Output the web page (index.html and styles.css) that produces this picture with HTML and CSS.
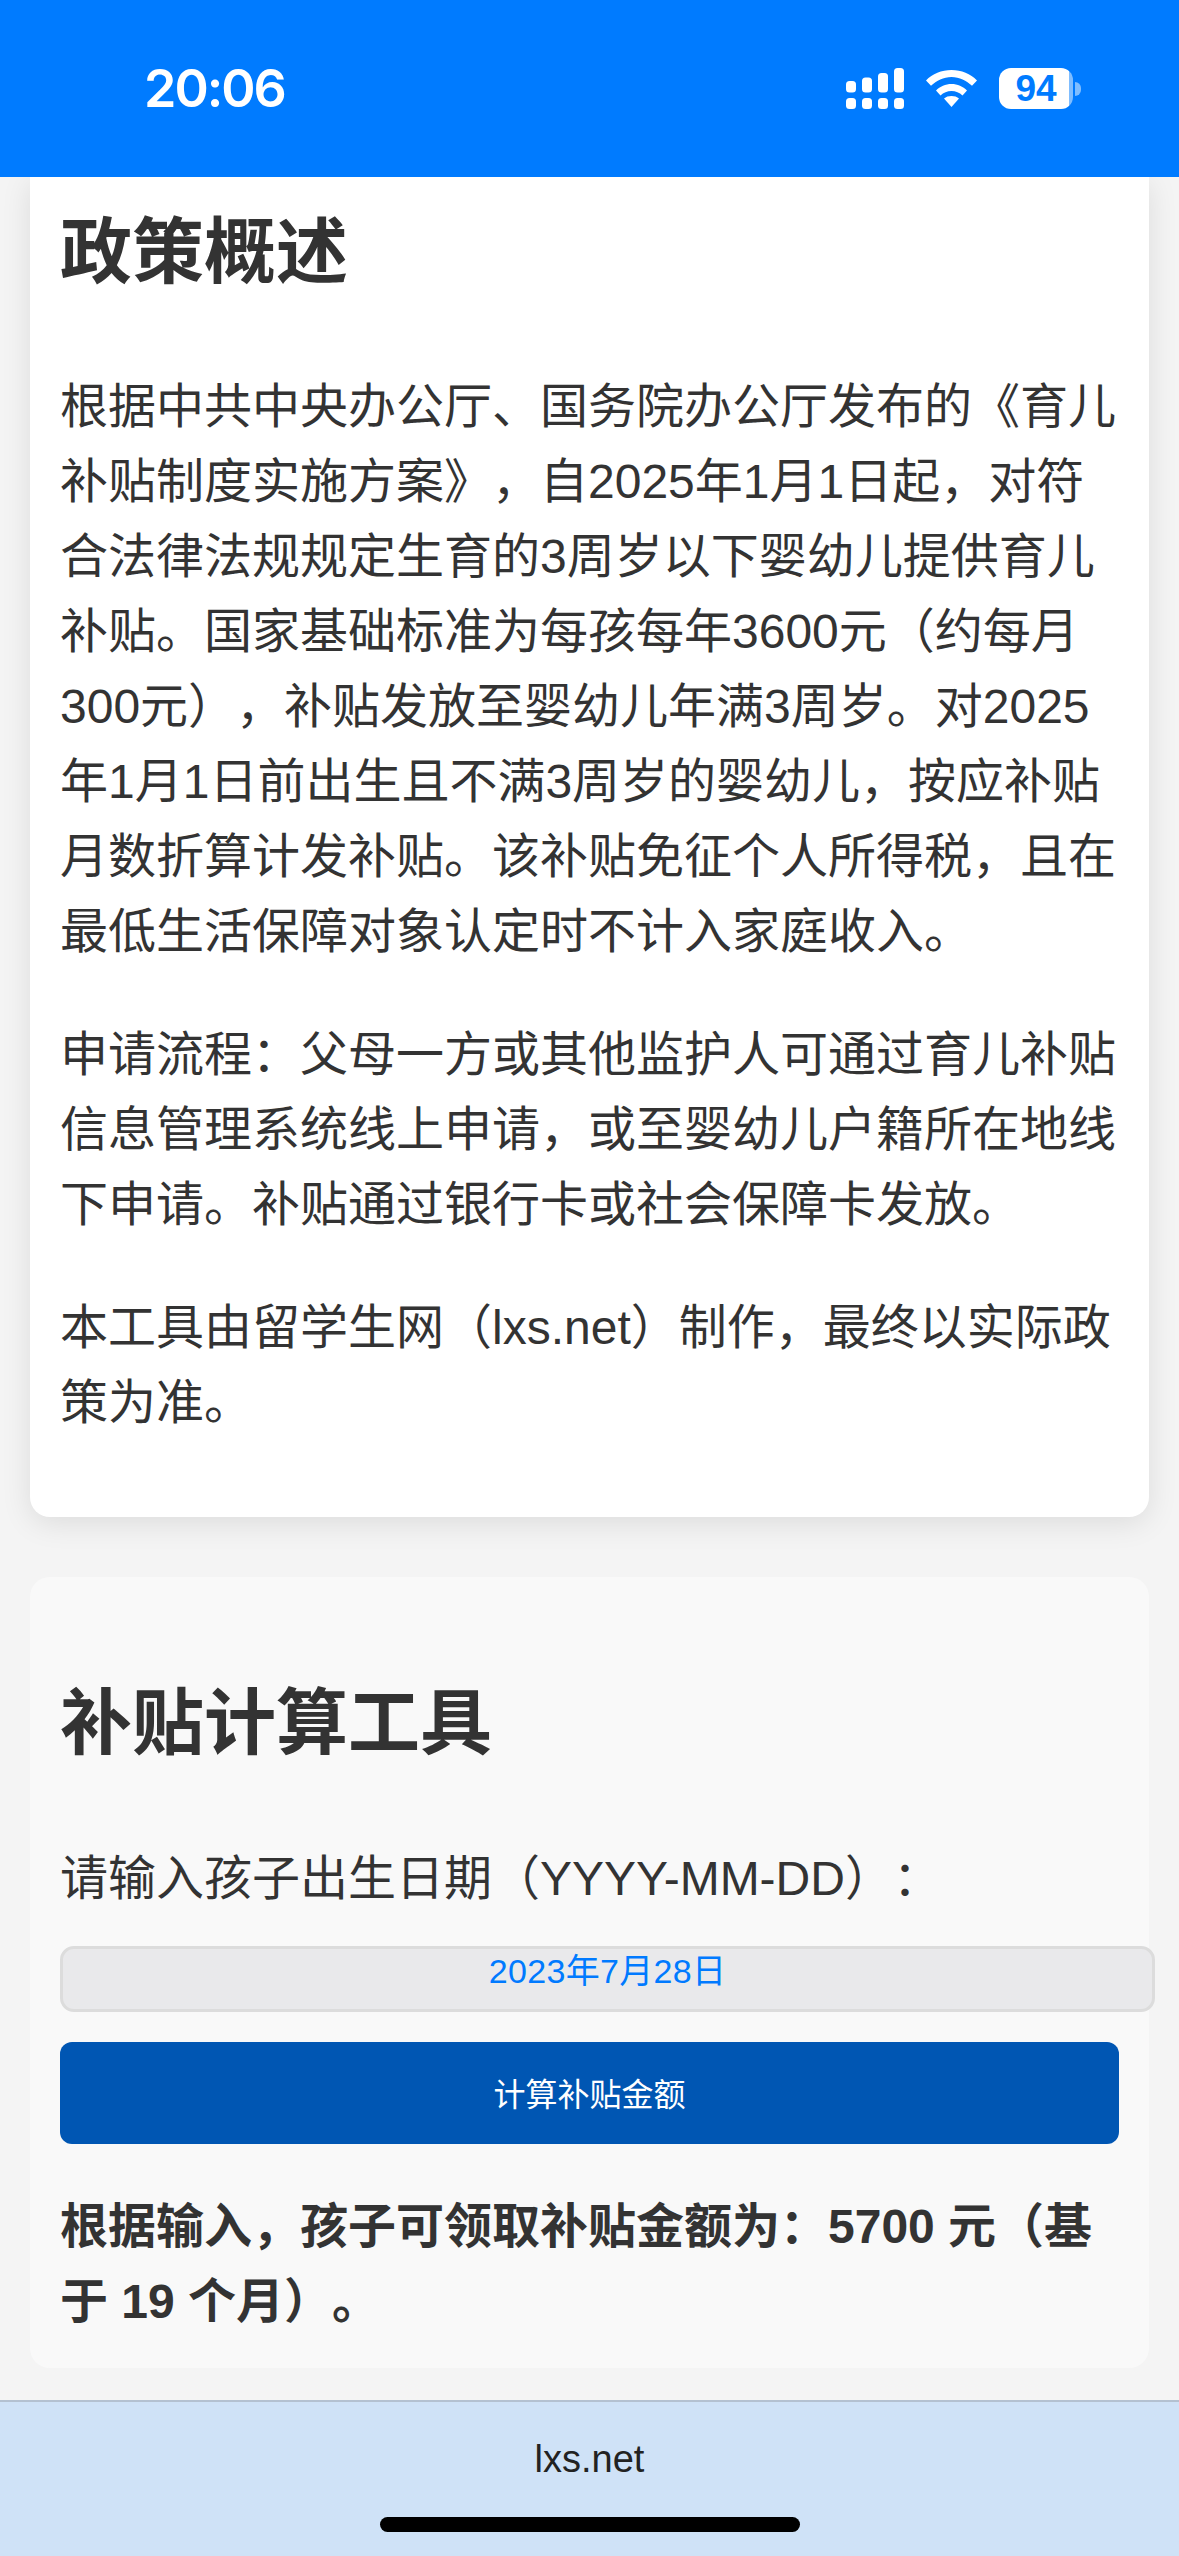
FILE: index.html
```html
<!DOCTYPE html>
<html lang="zh-CN">
<head>
<meta charset="utf-8">
<title>育儿补贴计算工具</title>
<link rel="stylesheet" href="styles.css">
</head>
<body>
<header class="status-bar">
  <span class="clock">20:06</span>
  <div class="status-icons">
    <svg class="signal" width="58" height="41" viewBox="0 0 58 41" aria-hidden="true">
      <rect x="0" y="13" width="10" height="11.500" rx="3.500"/><rect x="16" y="9.500" width="10" height="15" rx="3.500"/><rect x="32" y="5" width="10" height="19.500" rx="3.500"/><rect x="48" y="0" width="10" height="24.500" rx="3.500"/>
      <rect x="0" y="30" width="10" height="11" rx="3.500"/><rect x="16" y="30" width="10" height="11" rx="3.500"/><rect x="32" y="30" width="10" height="11" rx="3.500"/><rect x="48" y="30" width="10" height="11" rx="3.500"/>
    </svg>
    <svg class="wifi" width="51" height="37" viewBox="0 0 51 37" aria-hidden="true">
      <path d="M0 10.500C6.500 3.800 15.500 0 25.500 0S44.500 3.800 51 10.500L46 15.800C40.500 10.500 33.500 7 25.500 7S10.500 10.500 5 15.800Z"/>
      <path d="M10 20.500C14 16.500 19.500 14 25.500 14S37 16.500 41 20.500L36.500 25.500C33.500 22.700 29.700 21 25.500 21S17.500 22.700 14.500 25.500Z"/>
      <path d="M18 28.500C20 26.800 22.500 26 25.500 26S31 26.800 33 28.500L25.500 37Z"/>
    </svg>
    <div class="battery">
      <span class="battery-body">94</span>
      <span class="battery-cap"></span>
    </div>
  </div>
</header>
<main class="page">
  <section class="card policy">
    <h2>政策概述</h2>
    <p>根据中共中央办公厅、国务院办公厅发布的《育儿补贴制度实施方案》，自2025年1月1日起，对符合法律法规规定生育的3周岁以下婴幼儿提供育儿补贴。国家基础标准为每孩每年3600元（约每月300元），补贴发放至婴幼儿年满3周岁。对2025年1月1日前出生且不满3周岁的婴幼儿，按应补贴月数折算计发补贴。该补贴免征个人所得税，且在最低生活保障对象认定时不计入家庭收入。</p>
    <p>申请流程：父母一方或其他监护人可通过育儿补贴信息管理系统线上申请，或至婴幼儿户籍所在地线下申请。补贴通过银行卡或社会保障卡发放。</p>
    <p>本工具由留学生网（lxs.net）制作，最终以实际政策为准。</p>
  </section>
  <section class="card tool">
    <h2>补贴计算工具</h2>
    <label class="date-label" for="birth">请输入孩子出生日期（YYYY-MM-DD）：</label>
    <div class="date-input" id="birth">2023年7月28日</div>
    <button class="calc" type="button">计算补贴金额</button>
    <p class="result">根据输入，孩子可领取补贴金额为：5700 元（基于 19 个月）。</p>
  </section>
</main>
<footer class="site-footer">
  <span class="domain">lxs.net</span>
  <span class="home-indicator"></span>
</footer>
</body>
</html>
```
FILE: styles.css
```css
* { box-sizing: border-box; }
html, body { margin: 0; padding: 0; }
body {
  width: 1179px;
  height: 2556px;
  overflow: hidden;
  display: flex;
  flex-direction: column;
  background: #f4f4f4;
  color: #333;
  font-family: "Liberation Sans", "Noto Sans CJK SC", sans-serif;
  font-size: 48px;
  text-spacing-trim: space-all;
}
.status-bar {
  flex: none;
  height: 177px;
  background: #007bff;
  color: #fff;
  display: flex;
  justify-content: space-between;
  align-items: center;
  padding: 0 98px 0 144px;
}
.clock {
  font-family: Inter, "Liberation Sans", sans-serif;
  font-size: 52px;
  font-weight: 600;
  letter-spacing: -2px;
  line-height: 1;
}
.status-icons { display: flex; align-items: center; gap: 22px; }
.signal, .wifi { fill: #fff; display: block; }
.battery { display: flex; align-items: center; gap: 2px; }
.battery-body {
  width: 74px;
  height: 41px;
  border-radius: 12px;
  background: linear-gradient(to right, #fff 70px, #7fbdff 70px);
  color: #007bff;
  font-size: 37px;
  font-weight: 700;
  line-height: 41px;
  text-align: center;
}
.battery-cap {
  width: 6px;
  height: 14px;
  border-radius: 0 7px 7px 0;
  background: #7fbdff;
}
.page {
  flex: 1;
  min-height: 0;
  overflow: hidden;
  padding: 0 30px;
  display: flex;
  flex-direction: column;
  gap: 60px;
}
.card { flex: none; padding: 0 30px; border-radius: 20px; }
.policy {
  background: #fff;
  border-radius: 0 0 20px 20px;
  box-shadow: 0 6px 30px rgba(0, 0, 0, 0.1);
  padding-top: 30px;
  padding-bottom: 29px;
}
.tool { background: #f9f9f9; padding-top: 101px; padding-bottom: 29px; }
h2 {
  margin: 0;
  font-size: 72px;
  font-weight: 700;
  line-height: 90px;
  color: #333;
}
p { margin: 0; line-height: 75px; }
.policy h2 { margin-bottom: 72px; }
.policy p { margin-bottom: 48px; }
.date-label { display: block; margin-top: 73px; line-height: 75px; }
.date-input {
  width: 1095px;
  height: 66px;
  margin-top: 30px;
  background: #e9e9eb;
  border: 3px solid #dcdcdc;
  border-radius: 14px;
  color: #007aff;
  font-size: 34px;
  letter-spacing: 0.300px;
  line-height: 44px;
  text-align: center;
}
.calc {
  display: block;
  width: 1059px;
  height: 102px;
  margin-top: 30px;
  padding: 0 0 3px;
  border: 0;
  border-radius: 12px;
  background: #0056b3;
  color: #fff;
  font: inherit;
  font-size: 32px;
}
.result { margin-top: 45px; font-weight: 700; }
.site-footer {
  flex: none;
  height: 156px;
  position: relative;
  background: #cfe2f7;
  border-top: 2px solid #b4c1d1;
  color: #222;
  text-align: center;
  font-size: 38px;
  line-height: 72px;
  padding-top: 21px;
}
.domain { display: block; }
.home-indicator {
  position: absolute;
  left: 380px;
  bottom: 24px;
  width: 420px;
  height: 15px;
  border-radius: 8px;
  background: #000;
}
```
